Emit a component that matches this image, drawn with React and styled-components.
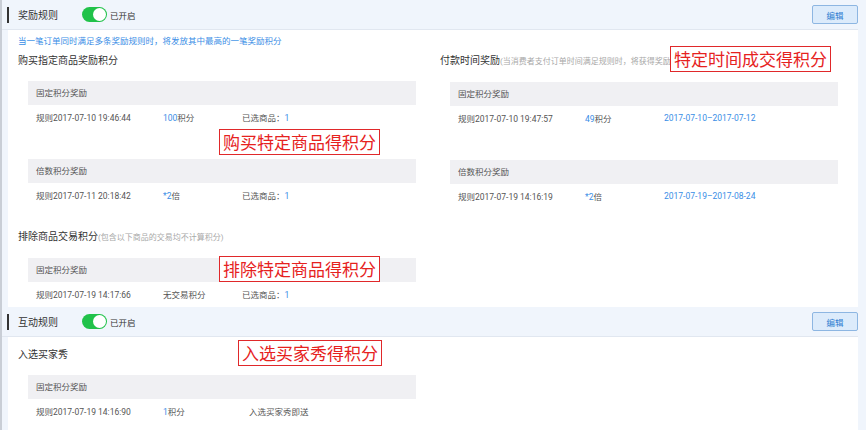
import React from 'react';
import styled, { createGlobalStyle } from 'styled-components';

const GlobalStyle = createGlobalStyle`
  html, body {
    margin: 0;
    padding: 0;
    background: #f0f5fc;
    font-family: 'Roboto', 'Noto Sans CJK SC', sans-serif;
    color: #333;
  }
`;

const Page = styled.div`
  width: 866px;
  height: 430px;
  overflow: hidden;
  border-left: 2px solid #c9ced6;
  box-sizing: border-box;
`;

const Section = styled.section`
  width: 856px;
`;

const Header = styled.div`
  height: 30px;
  display: flex;
  align-items: center;
  padding-left: 5px;
  border-bottom: 1px solid #e1e7f0;
  box-sizing: border-box;
  &::before {
    content: '';
    width: 2px;
    height: 16px;
    background: #333;
    margin-right: 9px;
  }
`;

const Title = styled.span`
  font-size: 10px;
  color: #333;
  width: 64px;
`;

const Toggle = styled.span`
  position: relative;
  width: 25px;
  height: 15px;
  border-radius: 8px;
  background: #21c24a;
  &::after {
    content: '';
    position: absolute;
    right: 1px;
    top: 1px;
    width: 13px;
    height: 13px;
    border-radius: 50%;
    background: #fff;
  }
`;

const State = styled.span`
  font-size: 8.5px;
  color: #333;
  margin-left: 3px;
`;

const EditButton = styled.button`
  margin-left: auto;
  width: 46px;
  height: 19px;
  padding: 0;
  border: 1px solid #8db6e2;
  border-radius: 2px;
  background: #dcebfb;
  color: #2f7dd1;
  font-size: 8.5px;
  font-family: 'Noto Sans CJK SC', sans-serif;
`;

const Panel = styled.div`
  margin-left: 6px;
  background: #fff;
  padding: ${(p) => p.$pad || '4px 10px 1px'};
`;

const Notice = styled.div`
  font-size: 8.5px;
  line-height: 14px;
  color: #3a8ee6;
  margin-bottom: 3px;
`;

const Columns = styled.div`
  display: grid;
  grid-template-columns: 407px 407px;
  column-gap: 15px;
`;

const Block = styled.div`
  position: relative;
  margin-top: ${(p) => p.$top || 0}px;
`;

const BlockTitle = styled.div`
  font-size: 10px;
  line-height: 20px;
  color: #333;
  margin-bottom: 10px;
  white-space: nowrap;
  small {
    font-size: 8px;
    color: #a8a8a8;
  }
`;

const Group = styled.div`
  position: relative;
  margin: 0 9px 0 10px;
  & + & {
    margin-top: 30px;
  }
`;

const GroupHead = styled.div`
  height: 24px;
  line-height: 24px;
  background: #f0f0f3;
  padding-left: 8px;
  font-size: 8.5px;
  color: #555;
`;

const Row = styled.div`
  height: 24px;
  display: grid;
  grid-template-columns: 127px ${(p) => p.$mid || 79}px 1fr;
  align-items: center;
  padding-left: 8px;
  font-size: 8.5px;
  color: #555;
  white-space: nowrap;
`;

const Blue = styled.span`
  color: #3a8ee6;
`;

const Mark = styled.div`
  position: absolute;
  left: ${(p) => p.$x}px;
  top: ${(p) => p.$y}px;
  border: 1px solid #e0282a;
  background: #fff;
  color: #e6221e;
  font-size: 17px;
  line-height: 24px;
  padding: 0 3px;
  white-space: nowrap;
  font-family: 'Noto Sans CJK SC', sans-serif;
`;

const RuleGroup = ({ head, time, amount, extra, mid, children }) => (
  <Group>
    <GroupHead>{head}</GroupHead>
    <Row $mid={mid}>
      <span>规则{time}</span>
      <span>{amount}</span>
      <span>{extra}</span>
    </Row>
    {children}
  </Group>
);

const SectionHeader = ({ title }) => (
  <Header>
    <Title>{title}</Title>
    <Toggle />
    <State>已开启</State>
    <EditButton>编辑</EditButton>
  </Header>
);

export default function App() {
  return (
    <Page>
      <GlobalStyle />
      <Section>
        <SectionHeader title="奖励规则" />
        <Panel>
          <Notice>当一笔订单同时满足多条奖励规则时，将发放其中最高的一笔奖励积分</Notice>
          <Columns>
            <div>
              <Block>
                <BlockTitle>购买指定商品奖励积分</BlockTitle>
                <RuleGroup
                  head="固定积分奖励"
                  time="2017-07-10 19:46:44"
                  amount={<><Blue>100</Blue>积分</>}
                  extra={<>已选商品：<Blue>1</Blue></>}
                >
                  <Mark $x={191} $y={48}>购买特定商品得积分</Mark>
                </RuleGroup>
                <RuleGroup
                  head="倍数积分奖励"
                  time="2017-07-11 20:18:42"
                  amount={<><Blue>*2</Blue>倍</>}
                  extra={<>已选商品：<Blue>1</Blue></>}
                />
              </Block>
              <Block $top={20}>
                <BlockTitle>
                  排除商品交易积分<small>(包含以下商品的交易均不计算积分)</small>
                </BlockTitle>
                <RuleGroup
                  head="固定积分奖励"
                  time="2017-07-19 14:17:66"
                  amount="无交易积分"
                  extra={<>已选商品：<Blue>1</Blue></>}
                >
                  <Mark $x={191} $y={-2}>排除特定商品得积分</Mark>
                </RuleGroup>
              </Block>
            </div>
            <Block>
              <BlockTitle>
                付款时间奖励<small>(当消费者支付订单时间满足规则时，将获得奖励积分)</small>
              </BlockTitle>
              <Mark $x={230} $y={-5}>特定时间成交得积分</Mark>
              <RuleGroup
                head="固定积分奖励"
                time="2017-07-10 19:47:57"
                amount={<><Blue>49</Blue>积分</>}
                extra={<Blue>2017-07-10–2017-07-12</Blue>}
              />
              <RuleGroup
                head="倍数积分奖励"
                time="2017-07-19 14:16:19"
                amount={<><Blue>*2</Blue>倍</>}
                extra={<Blue>2017-07-19–2017-08-24</Blue>}
              />
            </Block>
          </Columns>
        </Panel>
      </Section>
      <Section>
        <SectionHeader title="互动规则" />
        <Panel $pad="8px 10px 10px">
          <Columns>
            <Block>
              <BlockTitle>入选买家秀</BlockTitle>
              <Mark $x={220} $y={-5}>入选买家秀得积分</Mark>
              <RuleGroup
                head="固定积分奖励"
                time="2017-07-19 14:16:90"
                amount={<><Blue>1</Blue>积分</>}
                extra="入选买家秀即送"
                mid={86}
              />
            </Block>
          </Columns>
        </Panel>
      </Section>
    </Page>
  );
}
